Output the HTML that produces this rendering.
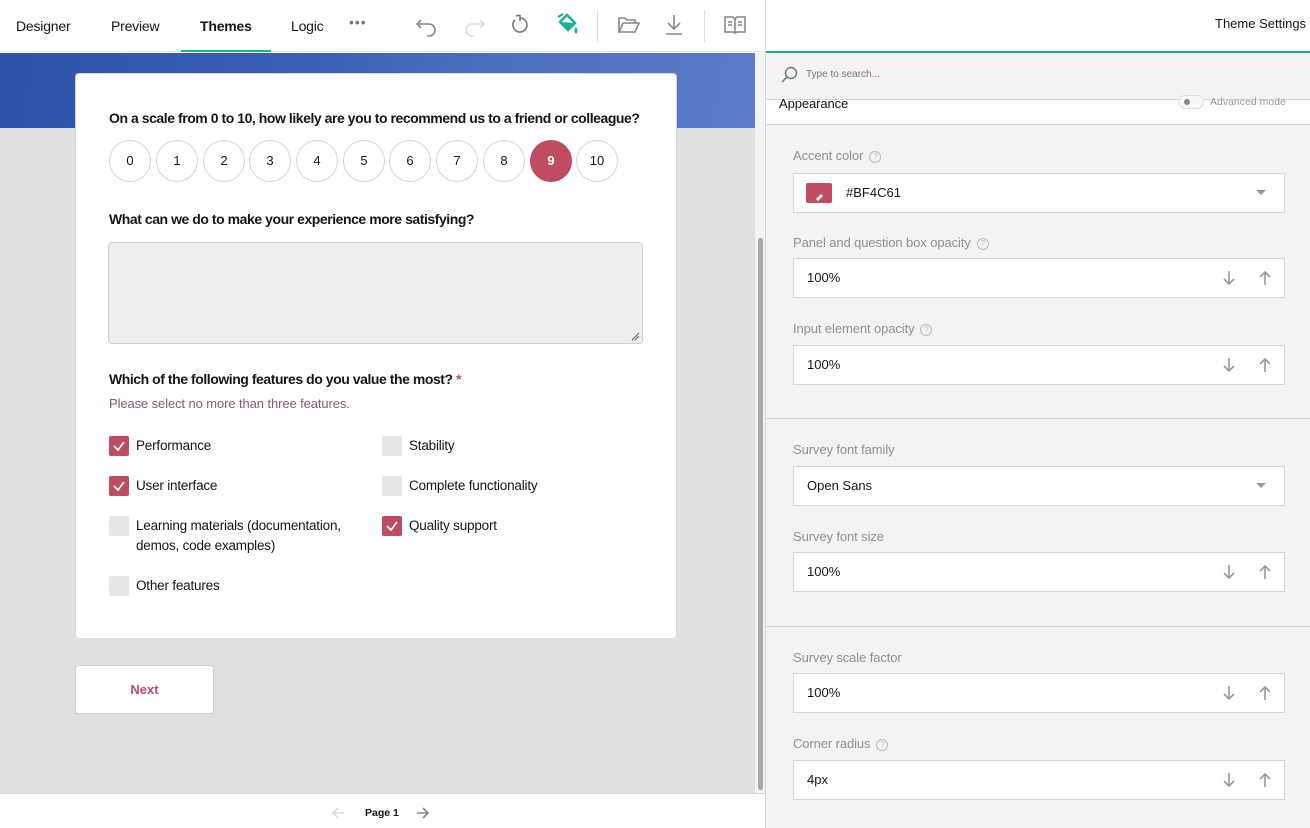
<!DOCTYPE html>
<html><head><meta charset="utf-8"><style>
*{box-sizing:border-box;margin:0;padding:0}
body{width:1310px;height:828px;overflow:hidden;font-family:"Liberation Sans",sans-serif;position:relative;background:#fff;color:#161616}
.abs{position:absolute}
.tab{position:absolute;top:18px;font-size:14px;color:#161616;letter-spacing:-0.2px}
.circle{position:absolute;top:140px;width:42px;height:42px;border:1px solid #d6d6d6;border-radius:50%;text-align:center;line-height:40px;font-size:13px;background:#fff}
.q{position:absolute;left:109px;font-size:14px;font-weight:bold;letter-spacing:-0.45px}
.cb{position:absolute;width:20px;height:20px;background:#e6e6e6;border-radius:2px}
.cb.on{background:#bf4c61}
.cl{position:absolute;font-size:13.5px;letter-spacing:-0.2px;line-height:20px}
.lbl{position:absolute;left:793px;font-size:13px;color:#8f8f8f;letter-spacing:-0.1px}
.help{display:inline-block;width:12px;height:12px;border:1px solid #bbb;border-radius:50%;font-size:8px;line-height:10px;text-align:center;color:#bbb;margin-left:6px;vertical-align:1px}
.box{position:absolute;left:793px;width:492px;height:40px;background:#fff;border:1px solid #d6d6d6;font-size:13px;padding-left:13px;line-height:38px;color:#161616}
.arr{position:absolute;top:11px}
.hr{position:absolute;left:766px;width:544px;height:1px;background:#d6d6d6}
</style></head><body>
<!-- left -->
<div class="abs" style="left:0;top:0;width:766px;height:52px;background:#fff;border-bottom:1px solid #e6e6e6"></div>
<div class="tab" style="left:16px">Designer</div>
<div class="tab" style="left:111px">Preview</div>
<div class="tab" style="left:200px;font-weight:bold;color:#161616">Themes</div>
<div class="abs" style="left:181px;top:50px;width:90px;height:2px;background:#19b394"></div>
<div class="tab" style="left:291px">Logic</div>
<div class="tab" style="left:349px;color:#777;letter-spacing:1px;top:14px">•••</div>
<svg class="abs" style="left:415px;top:15px" width="24" height="22" viewBox="0 0 24 22" fill="none" stroke="#888" stroke-width="1.6"><path d="M6 5 L2 9 L6 13 M2 9 H14 A6 6 0 0 1 14 21 H12"/></svg>
<svg class="abs" style="left:462px;top:15px" width="24" height="22" viewBox="0 0 24 22" fill="none" stroke="#ddd" stroke-width="1.6"><path d="M18 5 L22 9 L18 13 M22 9 H10 A6 6 0 0 0 10 21 H12"/></svg>
<svg class="abs" style="left:508px;top:13px" width="22" height="24" viewBox="0 0 22 24" fill="none" stroke="#777" stroke-width="1.6"><path d="M7 7 A7 7 0 1 0 12 5 M12 2 L12 8 M12 2 L8 3"/></svg>
<svg class="abs" style="left:555px;top:12px" width="26" height="26" viewBox="0 0 26 26"><path d="M5 10 L12 3 L20 11 L13 18 Z" fill="none" stroke="#19b394" stroke-width="2.4"/><path d="M5 10 L20 11 L13 18Z" fill="#19b394"/><path d="M3 5 L8 2" stroke="#19b394" stroke-width="2"/><path d="M21 15 Q24 19 21 22 Q18 19 21 15Z" fill="#19b394"/></svg>
<div class="abs" style="left:597px;top:10px;width:1px;height:32px;background:#ddd"></div>
<svg class="abs" style="left:617px;top:15px" width="24" height="20" viewBox="0 0 24 20" fill="none" stroke="#888" stroke-width="1.6"><path d="M2 17 V3 H8 L10 5 H18 V8 M2 17 L6 8 H22 L18 17 Z"/></svg>
<svg class="abs" style="left:664px;top:13px" width="20" height="24" viewBox="0 0 20 24" fill="none" stroke="#888" stroke-width="1.6"><path d="M10 2 V16 M4 10 L10 16 L16 10 M2 21 H18"/></svg>
<div class="abs" style="left:704px;top:10px;width:1px;height:32px;background:#ddd"></div>
<svg class="abs" style="left:724px;top:15px" width="22" height="20" viewBox="0 0 22 20" fill="none" stroke="#888" stroke-width="1.6"><path d="M1 2 H9 L11 4 L13 2 H21 V17 H13 L11 18 L9 17 H1 Z M11 4 V18 M4 7 H8 M4 10 H8 M14 7 H18 M14 10 H18"/></svg>
<div class="abs" style="left:0;top:53px;width:755px;height:740px;background:#e0e0e0"></div>
<div class="abs" style="left:0;top:53px;width:755px;height:75px;background:linear-gradient(100deg,#2d52a8 0%,#3b5fb5 40%,#4a6cbd 60%,#5b7cc8 100%)"></div>
<div class="abs" style="left:755px;top:53px;width:11px;height:740px;background:#f3f3f3"></div>
<div class="abs" style="left:758px;top:238px;width:5px;height:552px;background:#a8a8a8;border-radius:3px"></div>
<div class="abs" style="left:75px;top:73px;width:602px;height:566px;background:#fff;border:1px solid #d8d8d8;border-radius:4px"></div>
<div class="q" style="top:110px">On a scale from 0 to 10, how likely are you to recommend us to a friend or colleague?</div>
<div class="circle" style="left:109px">0</div>
<div class="circle" style="left:156px">1</div>
<div class="circle" style="left:203px">2</div>
<div class="circle" style="left:249px">3</div>
<div class="circle" style="left:296px">4</div>
<div class="circle" style="left:343px">5</div>
<div class="circle" style="left:389px">6</div>
<div class="circle" style="left:436px">7</div>
<div class="circle" style="left:483px">8</div>
<div class="circle" style="left:530px;background:#bf4c61;border-color:#bf4c61;color:#fff;font-weight:bold">9</div>
<div class="circle" style="left:576px">10</div>
<div class="q" style="top:211px">What can we do to make your experience more satisfying?</div>
<div class="abs" style="left:108px;top:242px;width:535px;height:102px;background:#eee;border:1px solid #d0d0d0;border-radius:4px"></div>
<svg class="abs" style="left:630px;top:331px" width="10" height="10"><path d="M2 9 L9 2 M5 9 L9 5" stroke="#666" stroke-width="1"/></svg>
<div class="q" style="top:371px">Which of the following features do you value the most? <span style="color:#bf4c61">*</span></div>
<div class="abs" style="left:109px;top:396px;font-size:13px;color:#8a5a63;letter-spacing:-0.1px">Please select no more than three features.</div>
<svg width="0" height="0" style="position:absolute"><defs><symbol id="ck" viewBox="0 0 20 20"><path d="M5 10 L9 14 L15 6" fill="none" stroke="#fff" stroke-width="1.8"/></symbol></defs></svg>
<div class="cb on" style="left:109px;top:436px"><svg width="20" height="20"><use href="#ck"/></svg></div><div class="cl" style="left:136px;top:436px">Performance</div>
<div class="cb on" style="left:109px;top:476px"><svg width="20" height="20"><use href="#ck"/></svg></div><div class="cl" style="left:136px;top:476px">User interface</div>
<div class="cb" style="left:109px;top:516px"></div><div class="cl" style="left:136px;top:516px">Learning materials (documentation,<br>demos, code examples)</div>
<div class="cb" style="left:109px;top:576px"></div><div class="cl" style="left:136px;top:576px">Other features</div>
<div class="cb" style="left:382px;top:436px"></div><div class="cl" style="left:409px;top:436px">Stability</div>
<div class="cb" style="left:382px;top:476px"></div><div class="cl" style="left:409px;top:476px">Complete functionality</div>
<div class="cb on" style="left:382px;top:516px"><svg width="20" height="20"><use href="#ck"/></svg></div><div class="cl" style="left:409px;top:516px">Quality support</div>
<div class="abs" style="left:75px;top:665px;width:139px;height:49px;background:#fff;border:1px solid #d0d0d0;border-radius:4px;text-align:center;line-height:47px;font-size:13px;font-weight:bold;color:#bf4c61">Next</div>
<div class="abs" style="left:0;top:793px;width:766px;height:35px;background:#fff;border-top:1px solid #d6d6d6"></div>
<svg class="abs" style="left:331px;top:806px" width="14" height="14" fill="none" stroke="#ddd" stroke-width="1.6"><path d="M13 7 H2 M7 2 L2 7 L7 12"/></svg>
<div class="abs" style="left:365px;top:807px;font-size:10.5px;font-weight:bold;color:#161616">Page 1</div>
<svg class="abs" style="left:416px;top:806px" width="14" height="14" fill="none" stroke="#888" stroke-width="1.6"><path d="M1 7 H12 M7 2 L12 7 L7 12"/></svg>
<!-- right -->
<div class="abs" style="left:765px;top:0;width:1px;height:828px;background:#d6d6d6"></div>
<div class="abs" style="left:766px;top:0;width:544px;height:828px;background:#f3f3f3"></div>
<div class="abs" style="left:766px;top:0;width:544px;height:51px;background:#fff"></div>
<div class="abs" style="left:1215px;top:16px;font-size:13px;color:#161616;white-space:nowrap">Theme Settings</div>
<div class="abs" style="left:766px;top:51px;width:544px;height:2px;background:#19b394"></div>
<svg class="abs" style="left:780px;top:66px" width="18" height="18" fill="none" stroke="#777" stroke-width="1.5"><circle cx="11" cy="7" r="5.5"/><path d="M7 11 L2 16"/></svg>
<div class="abs" style="left:806px;top:69px;font-size:10px;color:#777">Type to search...</div>
<div class="hr" style="top:99px"></div>
<div class="abs" style="left:766px;top:100px;width:544px;height:24px;background:#fff"></div>
<div class="abs" style="left:779px;top:96px;font-size:13px;color:#161616;letter-spacing:-0.1px">Appearance</div>
<div class="abs" style="left:1178px;top:95px;width:26px;height:14px;border:1px solid #ddd;border-radius:7px;background:#f8f8f8"><div style="position:absolute;left:5px;top:3px;width:6px;height:6px;border-radius:50%;background:#888"></div></div>
<div class="abs" style="left:1210px;top:96px;font-size:10.5px;color:#999">Advanced mode</div>
<div class="hr" style="top:124px"></div>

<div class="lbl" style="top:148px">Accent color<span class="help">?</span></div>
<div class="box" style="top:173px;padding-left:52px">#BF4C61
<div style="position:absolute;left:12px;top:9px;width:26px;height:20px;background:#bf4c61;border-radius:2px"><svg width="26" height="20"><path d="M10 13 L15 8 L17 10 L12 15 Z" fill="#fff"/></svg></div>
<svg style="position:absolute;right:18px;top:16px" width="10" height="6"><path d="M0 0 H10 L5 5Z" fill="#999"/></svg></div>

<div class="lbl" style="top:235px">Panel and question box opacity<span class="help">?</span></div>
<div class="box" style="top:258px">100%<svg class="arr" style="left:428px" width="14" height="16" fill="none" stroke="#999" stroke-width="1.6"><path d="M7 1 V14 M2 9 L7 14 L12 9"/></svg><svg class="arr" style="left:464px" width="14" height="16" fill="none" stroke="#999" stroke-width="1.6"><path d="M7 15 V2 M2 7 L7 2 L12 7"/></svg></div>

<div class="lbl" style="top:321px">Input element opacity<span class="help">?</span></div>
<div class="box" style="top:345px">100%<svg class="arr" style="left:428px" width="14" height="16" fill="none" stroke="#999" stroke-width="1.6"><path d="M7 1 V14 M2 9 L7 14 L12 9"/></svg><svg class="arr" style="left:464px" width="14" height="16" fill="none" stroke="#999" stroke-width="1.6"><path d="M7 15 V2 M2 7 L7 2 L12 7"/></svg></div>

<div class="hr" style="top:418px"></div>
<div class="lbl" style="top:442px">Survey font family</div>
<div class="box" style="top:466px">Open Sans<svg style="position:absolute;right:18px;top:16px" width="10" height="6"><path d="M0 0 H10 L5 5Z" fill="#999"/></svg></div>

<div class="lbl" style="top:529px">Survey font size</div>
<div class="box" style="top:552px">100%<svg class="arr" style="left:428px" width="14" height="16" fill="none" stroke="#999" stroke-width="1.6"><path d="M7 1 V14 M2 9 L7 14 L12 9"/></svg><svg class="arr" style="left:464px" width="14" height="16" fill="none" stroke="#999" stroke-width="1.6"><path d="M7 15 V2 M2 7 L7 2 L12 7"/></svg></div>

<div class="hr" style="top:626px"></div>
<div class="lbl" style="top:650px">Survey scale factor</div>
<div class="box" style="top:673px">100%<svg class="arr" style="left:428px" width="14" height="16" fill="none" stroke="#999" stroke-width="1.6"><path d="M7 1 V14 M2 9 L7 14 L12 9"/></svg><svg class="arr" style="left:464px" width="14" height="16" fill="none" stroke="#999" stroke-width="1.6"><path d="M7 15 V2 M2 7 L7 2 L12 7"/></svg></div>

<div class="lbl" style="top:736px">Corner radius<span class="help">?</span></div>
<div class="box" style="top:760px">4px<svg class="arr" style="left:428px" width="14" height="16" fill="none" stroke="#999" stroke-width="1.6"><path d="M7 1 V14 M2 9 L7 14 L12 9"/></svg><svg class="arr" style="left:464px" width="14" height="16" fill="none" stroke="#999" stroke-width="1.6"><path d="M7 15 V2 M2 7 L7 2 L12 7"/></svg></div>
</body></html>
